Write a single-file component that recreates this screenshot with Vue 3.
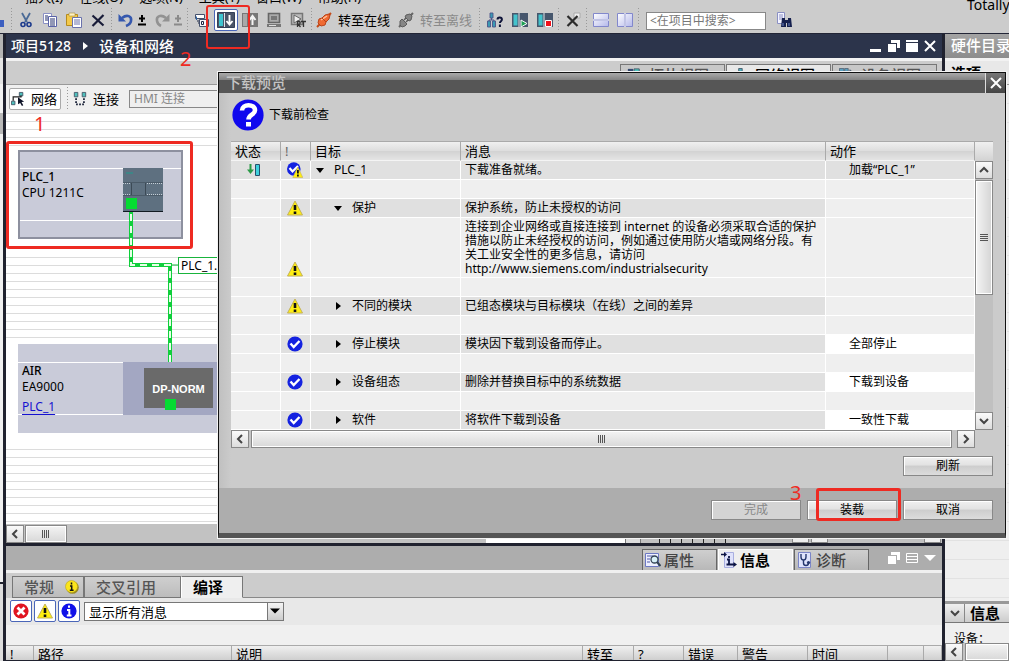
<script setup>
import { ref } from 'vue'

const menus = ['插入(I)', '在线(O)', '选项(N)', '工具(T)', '窗口(W)', '帮助(H)']

const editTools = [
  { icon: 'cut', label: '剪切' },
  { icon: 'copy', label: '复制' },
  { icon: 'paste', label: '粘贴' },
  { icon: 'delete', label: '删除' },
]
const loadTools = [
  { icon: 'compile', label: '编译' },
  { icon: 'download', label: '下载到设备', active: true },
  { icon: 'upload', label: '上传' },
  { icon: 'simulate', label: '仿真' },
  { icon: 'runtime', label: '启动运行系统' },
]
const deviceTools = [
  { icon: 'access', label: '可访问的设备' },
  { icon: 'startcpu', label: '启动 CPU' },
  { icon: 'stopcpu', label: '停止 CPU' },
]

const viewTabs = [
  { icon: 'topology', label: '拓扑视图' },
  { icon: 'netview', label: '网络视图', active: true },
  { icon: 'devview', label: '设备视图' },
]

const rows = [
  { status: 'load', mark: 'checkwarn', level: 0, open: true, target: 'PLC_1', message: '下载准备就绪。', action: '加载“PLC_1”', shade: true },
  {},
  { mark: 'warn', level: 1, open: true, target: '保护', message: '保护系统，防止未授权的访问' },
  {
    mark: 'warn',
    tall: true,
    message:
      '连接到企业网络或直接连接到 internet 的设备必须采取合适的保护\n措施以防止未经授权的访问，例如通过使用防火墙或网络分段。有\n关工业安全性的更多信息，请访问\nhttp://www.siemens.com/industrialsecurity',
  },
  {},
  { mark: 'warn', level: 1, target: '不同的模块', message: '已组态模块与目标模块（在线）之间的差异' },
  {},
  { mark: 'check', level: 1, target: '停止模块', message: '模块因下载到设备而停止。', action: '全部停止', edit: true },
  {},
  { mark: 'check', level: 1, target: '设备组态', message: '删除并替换目标中的系统数据', action: '下载到设备', edit: true },
  {},
  { mark: 'check', level: 1, target: '软件', message: '将软件下载到设备', action: '一致性下载', edit: true },
]

const inspectorTabs = [
  { icon: 'props', label: '属性' },
  { icon: 'info', label: '信息', active: true },
  { icon: 'diag', label: '诊断' },
]
const filterButtons = [
  { icon: 'error', label: '错误' },
  { icon: 'warn', label: '警告' },
  { icon: 'infodot', label: '信息' },
]
const logColumns = ['!', '路径', '说明', '转至', '?', '错误', '警告', '时间', '', '']
const filter = ref('显示所有消息')
const search = ref('')
</script>

<template>
  <div class="app">
    <svg class="defs" aria-hidden="true">
      <defs>
        <linearGradient id="lilac" x1="0" y1="0" x2="1" y2="1">
          <stop offset="0" stop-color="#fff" /><stop offset="1" stop-color="#b4b8ea" />
        </linearGradient>
      </defs>
      <symbol id="cut" viewBox="0 0 16 16"><path d="M4 1l5 9M12 1L7 10" stroke="#4b6a96" stroke-width="1.8" fill="none" /><circle cx="5" cy="12.500" r="2" fill="none" stroke="#1c3a8c" stroke-width="1.600" /><circle cx="11" cy="12.500" r="2" fill="none" stroke="#1c3a8c" stroke-width="1.600" /></symbol>
      <symbol id="copy" viewBox="0 0 16 16"><path d="M1.500 1.500h8v10h-8z" fill="#fff" stroke="#8a90c4" /><path d="M6.500 4.500h8v10h-8z" fill="#fff" stroke="#5a63a8" /><path d="M3 4h3M3 6h3M3 8h3M8 7h5M8 9h5M8 11h5M8 13h5" stroke="#25306e" /></symbol>
      <symbol id="paste" viewBox="0 0 16 16"><path d="M.5 2.500h11v11H.5z" fill="#f3c94a" stroke="#b58b1e" /><path d="M3 1h6v3H3z" fill="#fff3c4" stroke="#a58a3a" stroke-width=".6" /><path d="M6.500 5.500h9v10h-9z" fill="#fff" stroke="#6a72ac" /><path d="M8 8h6M8 10h6M8 12h6" stroke="#6a72ac" /></symbol>
      <symbol id="delete" viewBox="0 0 16 16"><path d="M2.500 3.500l11 10M13.500 3l-11 11" stroke="#181c38" stroke-width="2.200" /></symbol>
      <symbol id="undo" viewBox="0 0 16 16"><path d="M4 6c5-4 10-2 9 3-.4 2.500-2.500 4-5 5" fill="none" stroke="#3558ae" stroke-width="2.600" /><path d="M.5 2v7.500H8z" fill="#3558ae" /></symbol>
      <symbol id="redo" viewBox="0 0 16 16"><path d="M12 6C7 2 2 4 3 9c.4 2.500 2 4 4 5" fill="none" stroke="#929292" stroke-width="2.600" /><path d="M15.500 2v7.500H8z" fill="#929292" /></symbol>
      <symbol id="plusminus" viewBox="0 0 8 12"><path d="M4 1v7M1 4.500h6M0 10.500h8" stroke="currentColor" stroke-width="2" /></symbol>
      <symbol id="compile" viewBox="0 0 16 16"><path d="M1.500 2.500h9v4h-9z" fill="#fff" stroke="#44506c" /><path d="M2.500 8V4.500" stroke="#2c66a8" /><path d="M5.500 7.500h9v7h-9z" fill="#f6f6fa" stroke="#44506c" /><path d="M7.500 9.500h2v3h-2zM12.500 9v4.500" fill="none" stroke="#1c2642" /><path d="M3 9h2M4 11h1" stroke="#1c2642" /></symbol>
      <symbol id="download" viewBox="0 0 18 16"><path d="M.5.500h17v15H.5z" fill="#4a5468" stroke="#344058" /><path d="M2 2h4v12H2z" fill="#3fc4cf" /><path d="M7.500 1v14" stroke="#dfe4ec" /><path d="M12.500 3v9M9.500 9l3 3.500 3-3.500" fill="none" stroke="#fff" stroke-width="1.900" /></symbol>
      <symbol id="upload" viewBox="0 0 16 16"><path d="M0 1h16v14H0z" fill="#777" /><path d="M1 2h4v12H1z" fill="#a8a8a8" /><path d="M10.500 13V5M7.500 8l3-4 3 4" fill="none" stroke="#f4f4f4" stroke-width="2" /></symbol>
      <symbol id="simulate" viewBox="0 0 16 16"><path d="M2.500 1.500h11v9h-11z" fill="#aaa" stroke="#666" stroke-width="1.600" /><path d="M5 4h6v4H5z" fill="#777" /><path d="M1 12h14v3H1z" fill="#777" /><path d="M3 13.500h7" stroke="#ddd" /></symbol>
      <symbol id="runtime" viewBox="0 0 16 16"><path d="M1.500 1.500h11v11h-11z" fill="#bbb" stroke="#777" stroke-width="1.500" /><path d="M4 3l7 4-7 4z" fill="#eee" stroke="#666" /><path d="M7.500 15V9.500h2.200q1 1.300 0 2.600H8l2.500 2.900M11 9.500h5M13.500 9.500V15" fill="none" stroke="#333" stroke-width="1.300" /></symbol>
      <symbol id="online" viewBox="0 0 16 16"><path d="M1 15l3-3M12 4l3-3" stroke="#c54a18" stroke-width="2" /><path d="M3 7l3-1 3-3 4-1 1 1-1 4-3 3-1 3-4 1-3-3z" fill="#ef6a32" stroke="#b9441a" /><path d="M5 8l6-4" stroke="#ffc09a" stroke-width="1.500" /><path d="M6 6l4 4" stroke="#b9441a" /></symbol>
      <symbol id="offline" viewBox="0 0 16 16"><path d="M1 15l3-3M12 4l3-3" stroke="#666" stroke-width="2" /><path d="M8 3l4-1 2 2-1 4-2 1-4-4zM2 9l2-2 5 5-2 2-3 1-2-2z" fill="#858585" stroke="#5c5c5c" /><path d="M6 8l2-2M8 10l2-2" stroke="#5c5c5c" stroke-width="1.500" /></symbol>
      <symbol id="access" viewBox="0 0 16 16"><path d="M3 1h3v5H3zM.5 9h3v6h-3zM5.500 9h3v6h-3z" fill="#3a9ab4" stroke="#4c5488" stroke-width=".9" /><path d="M4.500 6v2M2 9V8h5v1" stroke="#4c5488" fill="none" /><path d="M10.500 7.500q0-2 2.200-2t2.200 2c0 1.600-2 1.700-2 3.500M12.900 12.500V15" fill="none" stroke="#0d1338" stroke-width="2" /></symbol>
      <symbol id="startcpu" viewBox="0 0 16 16"><path d="M0 1h16v14H0z" fill="#46566c" /><path d="M1.500 2.500h4v11h-4z" fill="#42c3cc" /><path d="M7 1v14" stroke="#dfe6ea" /><path d="M9 8l6 3.500L9 15z" fill="#1ea055" stroke="#fff" /></symbol>
      <symbol id="stopcpu" viewBox="0 0 16 16"><path d="M0 1h16v14H0z" fill="#46566c" /><path d="M1.500 2.500h4v11h-4z" fill="#42c3cc" /><path d="M7 1v14" stroke="#dfe6ea" /><path d="M8.500 8.500h6v6h-6z" fill="#f0121c" stroke="#fff" /></symbol>
      <symbol id="crossref" viewBox="0 0 16 16"><path d="M9 1h6v5H9z" fill="#eee" stroke="#aaa" /><path d="M2.500 4l10 10M12.500 4l-10 10" stroke="#2c2c2c" stroke-width="2.200" /></symbol>
      <symbol id="splith" viewBox="0 0 16 16"><path d="M.5 1.500h15v6H.5zM.5 8.500h15v6H.5z" fill="url(#lilac)" stroke="#8288cc" /><path d="M0 8h16" stroke="#fff" /></symbol>
      <symbol id="splitv" viewBox="0 0 16 16"><path d="M.5 1.500h7v13h-7zM8.500 1.500h7v13h-7z" fill="url(#lilac)" stroke="#8288cc" /><path d="M8 1v14" stroke="#fff" /></symbol>
      <symbol id="find" viewBox="0 0 16 16"><path d="M1.500.5h7v11h-7z" fill="#f4f4ff" stroke="#8a90c4" /><path d="M3 3h4M3 5h4M3 7h4" stroke="#8a90c4" /><path d="M6 6h3v2h3V6h3l1 9h-5v-4h-1v4H5z" fill="#15204e" /><path d="M7 11v3M13 11v3" stroke="#6e86c8" /></symbol>
      <symbol id="network" viewBox="0 0 16 16"><path d="M9.500.5h4v4h-4zM.5 10.500h4v4h-4z" fill="#4ec0bc" stroke="#456" /><path d="M2.500 10V5.500h9V4" fill="none" stroke="#222" stroke-width="1.400" /><path d="M8 6l7 5-3 .5 2 3.500-1.500 1-2-3.500L8 14z" fill="#0e1428" /></symbol>
      <symbol id="connection" viewBox="0 0 16 16"><path d="M1.500.5h4v5h-4zM10.500.5h4v5h-4z" fill="#4ec0bc" stroke="#456" /><path d="M3.500 7v7h9V7" fill="none" stroke="#1a2238" stroke-width="2" stroke-dasharray="2 1.500" /></symbol>
      <symbol id="topology" viewBox="0 0 16 16"><path d="M1 1h6v14H1z" fill="#364a72" /><path d="M8 1h6v6H8z" fill="#4cc4bc" stroke="#456" /></symbol>
      <symbol id="netview" viewBox="0 0 16 16"><path d="M6.500.5h4v6h-4z" fill="#4cb0c0" stroke="#456" /><path d="M8.500 7v4M2 11h12" stroke="#333" /></symbol>
      <symbol id="devview" viewBox="0 0 16 16"><path d="M.5.500h5v12h-5zM6.500.5h4v12h-4z" fill="#5aa0c0" stroke="#567" /><path d="M12 2l3 3v8" fill="none" stroke="#567" stroke-width="1.500" /></symbol>
      <symbol id="warn" viewBox="0 0 16 16"><path d="M8 1l7.500 14H.5z" fill="#ffee10" stroke="#c3b15a" stroke-width="1" stroke-linejoin="round" /><path d="M8 5v5M8 11.500V14" stroke="#111" stroke-width="2.600" /></symbol>
      <symbol id="check" viewBox="0 0 16 16"><circle cx="8" cy="8" r="7.600" fill="#1422e0" /><path d="M3.500 7.500l3.200 3.500L12.500 5" fill="none" stroke="#fff" stroke-width="2.400" /></symbol>
      <symbol id="checkwarn" viewBox="0 0 16 16"><circle cx="6.800" cy="7" r="6.800" fill="#1422e0" /><path d="M2.500 6l3 3.500L11 4" fill="none" stroke="#fff" stroke-width="2.200" /><path d="M10.800 5l5 10.500h-10z" fill="#ffee10" stroke="#c3b15a" stroke-width=".6" /><path d="M10.900 8v3.500M10.900 12.500v2" stroke="#111" stroke-width="1.800" /></symbol>
      <symbol id="load" viewBox="0 0 14 14"><path d="M3.500 1v7" stroke="#2a9a46" stroke-width="2" /><path d="M0 6.500h7L3.500 11z" fill="#2a9a46" /><path d="M8.500 1.500h4v11h-4z" fill="#3fd0dc" stroke="#26506c" /></symbol>
      <symbol id="error" viewBox="0 0 16 16"><circle cx="8" cy="8" r="7.600" fill="#e01420" /><path d="M4.500 4.500l7 7M11.500 4.500l-7 7" stroke="#fff" stroke-width="2.800" /></symbol>
      <symbol id="infodot" viewBox="0 0 16 16"><circle cx="8" cy="8" r="7.600" fill="#1010e8" /><path d="M8 2.500v2.300M6 7h2.300v5M5.800 12.500h4.700" fill="none" stroke="#fff" stroke-width="2" /></symbol>
      <symbol id="infoyellow" viewBox="0 0 14 14"><circle cx="7.500" cy="7.500" r="6.300" fill="#9a8a20" /><circle cx="6.500" cy="6.500" r="6" fill="#fbe51c" stroke="#b9a51c" stroke-width=".6" /><path d="M6.500 2.500v2M5 6h1.700v4M4.800 10.200h3.800" fill="none" stroke="#111" stroke-width="1.500" /></symbol>
      <symbol id="question" viewBox="0 0 32 32"><circle cx="16" cy="16" r="15.600" fill="#1008ee" /><path d="M10 11.500c0-7 13-7 13-.3 0 4.600-6.500 4.300-6.500 9.300" fill="none" stroke="#fff" stroke-width="4.600" /><path d="M14 23h5v4.500h-5z" fill="#fff" /></symbol>
      <symbol id="props" viewBox="0 0 16 16"><path d="M.5 1.500h13v13H.5z" fill="#eef0ff" stroke="#6c78c4" /><path d="M2 4h6M2 7h3M2 10h3" stroke="#4c58a8" /><circle cx="9.500" cy="7.500" r="3.500" fill="#d8f0f8" stroke="#345" stroke-width="1.300" /><path d="M12 10l3.500 4" stroke="#345" stroke-width="2" /></symbol>
      <symbol id="info" viewBox="0 0 16 16"><path d="M3.500.5h9v15h-9z" fill="#dfe2fb" stroke="#a8aee0" /><path d="M0 2.500h4" stroke="#0c1444" stroke-width="1.500" /><path d="M3 0l3 2.500L3 5zM12.500 10l3.500 2.500-3.500 2.500z" fill="#0c1444" /><path d="M8 4v2M6 7.500h2V12M5.500 12.500H13" fill="none" stroke="#0c1444" stroke-width="1.800" /></symbol>
      <symbol id="diag" viewBox="0 0 16 16"><path d="M1.500.5h12v15h-12z" fill="#dfe4fb" stroke="#7c86c8" /><path d="M4 2v3q0 3 2.500 3T9 5V2M6.500 8v3q0 2.500 2.500 2.500t2.500-2.500" fill="none" stroke="#26386e" stroke-width="1.400" /><circle cx="11.500" cy="10.500" r="1.600" fill="#26386e" /></symbol>
      <symbol id="minimize" viewBox="0 0 12 12"><path d="M0 9h11v3H0z" fill="currentColor" /></symbol>
      <symbol id="restore" viewBox="0 0 12 12"><path d="M3 0h9v8H9V3H3z" fill="currentColor" /><path d="M0 4h8v8H0z" fill="currentColor" /></symbol>
      <symbol id="maximize" viewBox="0 0 12 12"><path d="M0 0h12v2H0zM0 3h12v9H0z" fill="currentColor" /></symbol>
      <symbol id="close" viewBox="0 0 12 12"><path d="M1 1l10 10M11 1L1 11" stroke="currentColor" stroke-width="2" /></symbol>
      <symbol id="list" viewBox="0 0 12 12"><path d="M.5 1.500h11v9H.5zM1 4.500h10M1 7.500h10" fill="none" stroke="currentColor" /></symbol>
      <symbol id="tri" viewBox="0 0 12 12"><path d="M0 3h12L6 9z" fill="currentColor" /></symbol>
      <symbol id="chevleft" viewBox="0 0 12 12"><path d="M8 2L4 6l4 4" fill="none" stroke="#444" stroke-width="2" /></symbol>
      <symbol id="chevright" viewBox="0 0 12 12"><path d="M4 2l4 4-4 4" fill="none" stroke="#444" stroke-width="2" /></symbol>
      <symbol id="chevup" viewBox="0 0 12 12"><path d="M2 8l4-4 4 4" fill="none" stroke="#444" stroke-width="2" /></symbol>
      <symbol id="chevdown" viewBox="0 0 12 12"><path d="M2 4l4 4 4-4" fill="none" stroke="#444" stroke-width="2" /></symbol>
    </svg>

    <header class="top">
      <nav class="menubar">
        <span v-for="m in menus" :key="m">{{ m }}</span>
        <span class="brand">Totally</span>
      </nav>
      <div class="toolbar">
        <span class="savefrag"></span>
        <span class="sep"></span>
        <button v-for="t in editTools" :key="t.icon" class="tool" :aria-label="t.label"><svg><use :href="'#' + t.icon" /></svg></button>
        <span class="sep"></span>
        <button class="tool" aria-label="撤销"><svg><use href="#undo" /></svg></button>
        <button class="tool tiny" aria-label="撤销列表"><svg><use href="#plusminus" /></svg></button>
        <button class="tool" aria-label="重做"><svg><use href="#redo" /></svg></button>
        <button class="tool tiny dim" aria-label="重做列表"><svg><use href="#plusminus" /></svg></button>
        <span class="sep"></span>
        <button v-for="t in loadTools" :key="t.icon" class="tool" :class="{ active: t.active }" :aria-label="t.label"><svg><use :href="'#' + t.icon" /></svg></button>
        <span class="sep"></span>
        <button class="tool wide"><svg><use href="#online" /></svg>转至在线</button>
        <button class="tool wide dim"><svg><use href="#offline" /></svg>转至离线</button>
        <span class="sep"></span>
        <button v-for="t in deviceTools" :key="t.icon" class="tool roomy" :aria-label="t.label"><svg><use :href="'#' + t.icon" /></svg></button>
        <span class="sep"></span>
        <button class="tool" aria-label="交叉引用"><svg><use href="#crossref" /></svg></button>
        <span class="sep"></span>
        <button class="tool" aria-label="水平拆分"><svg><use href="#splith" /></svg></button>
        <button class="tool" aria-label="垂直拆分"><svg><use href="#splitv" /></svg></button>
        <span class="sep"></span>
        <input v-model="search" class="search" type="text" placeholder="<在项目中搜索>" aria-label="在项目中搜索" />
        <button class="tool" aria-label="搜索"><svg><use href="#find" /></svg></button>
      </div>
    </header>

    <div class="body">
      <aside class="leftedge"></aside>
      <main class="main">
        <div class="titlebar">
          <span>项目5128</span>
          <i class="crumb"></i>
          <span>设备和网络</span>
          <div class="winbtns">
            <button aria-label="最小化"><svg><use href="#minimize" /></svg></button>
            <button aria-label="还原"><svg><use href="#restore" /></svg></button>
            <button aria-label="最大化"><svg><use href="#maximize" /></svg></button>
            <button aria-label="关闭编辑器"><svg><use href="#close" /></svg></button>
          </div>
        </div>

        <div class="viewtabs">
          <button v-for="t in viewTabs" :key="t.icon" :class="{ active: t.active }"><svg><use :href="'#' + t.icon" /></svg>{{ t.label }}</button>
        </div>

        <div class="netbar">
          <button class="netbtn on"><svg><use href="#network" /></svg>网络</button>
          <span class="sep"></span>
          <button class="netbtn"><svg><use href="#connection" /></svg>连接</button>
          <select disabled aria-label="连接类型"><option>HMI 连接</option></select>
        </div>

        <div class="canvas">
          <div class="clearing first"></div>
          <div class="clearing second"></div>
          <div class="device plc">
            <div class="caption"><b>PLC_1</b><span>CPU 1211C</span></div>
            <svg class="module" viewBox="0 0 40 44"><path d="M0 0h40v44H0z" fill="#5e7080" /><path d="M0 43.500h40" stroke="#111a22" /><path d="M3 5h7" stroke="#1f9a8e" /><path d="M0 14.500h40M0 27.500h40" stroke="#4a5a68" /><path d="M0 15.500h8M24 15.500h16M0 26.500h8M24 26.500h16" stroke="#c4ced6" stroke-dasharray="1 1" /><path d="M8.500 15v12M22.500 15v12" stroke="#3c4a56" /><path d="M3 30h11v11H3z" fill="#05dc32" /></svg>
          </div>
          <div class="device air">
            <div class="caption"><b>AIR</b><span>EA9000</span><a href="#plc">PLC_1</a></div>
            <div class="rack"><div class="norm">DP-NORM<i></i></div></div>
          </div>
          <svg class="wires" width="220" height="260">
            <path d="M125 99v53h39v97" fill="none" stroke="#10cf3c" stroke-width="4" />
            <path d="M125 101v51h39v97" fill="none" stroke="#e8ffe8" stroke-width="2" stroke-dasharray="7 5" />
            <path d="M166 152h7" stroke="#10b838" />
          </svg>
          <div class="netlabel">PLC_1.PN/IE</div>
          <span class="num one">1</span>
        </div>

        <div class="hscroll">
          <button class="sb" aria-label="向左滚动"><svg><use href="#chevleft" /></svg></button>
          <span class="thumb"><i></i></span>
          <span class="zoomfield"></span>
          <span class="ticks"></span>
          <span class="stub"></span>
          <span class="stub"></span>
          <span class="stub end"></span>
        </div>

        <section class="inspector">
          <div class="inspect-tabs">
            <button v-for="t in inspectorTabs" :key="t.icon" :class="{ active: t.active }"><svg><use :href="'#' + t.icon" /></svg>{{ t.label }}</button>
            <div class="panebtns">
              <svg><use href="#restore" /></svg>
              <svg><use href="#list" /></svg>
              <svg><use href="#tri" /></svg>
            </div>
          </div>
          <div class="subtabs">
            <button class="general">常规<svg><use href="#infoyellow" /></svg></button>
            <button class="xref">交叉引用</button>
            <button class="active">编译</button>
            <span class="rest"></span>
          </div>
          <div class="filters">
            <button v-for="f in filterButtons" :key="f.icon" :aria-label="f.label"><svg><use :href="'#' + f.icon" /></svg></button>
            <div class="combo">
              <select v-model="filter" aria-label="消息过滤"><option>显示所有消息</option></select>
              <span class="drop"><svg><use href="#tri" /></svg></span>
            </div>
          </div>
          <table class="log">
            <colgroup><col class="c0" /><col class="c1" /><col /><col class="c3" /><col class="c4" /><col class="c5" /><col class="c6" /><col class="c7" /><col class="c8" /><col class="c9" /></colgroup>
            <thead><tr><th v-for="(c, i) in logColumns" :key="i"><div>{{ c }}</div></th></tr></thead>
          </table>
        </section>
      </main>

      <aside class="catalog">
        <div class="cat-title">硬件目录</div>
        <div class="cat-options">选项</div>
        <div class="cat-list"></div>
        <div class="cat-info"><span class="toggle"><svg><use href="#chevdown" /></svg></span>信息</div>
        <div class="cat-device">设备：</div>
        <div class="cat-scroll"><button class="sb" aria-label="目录向左滚动"><svg><use href="#chevleft" /></svg></button><span class="thumb"></span></div>
      </aside>
    </div>

    <div class="redbox plcbox"></div>
    <div class="redbox toolbox"></div>
    <span class="num two">2</span>

    <section class="dialog" role="dialog" aria-labelledby="dlg-title">
      <div class="dlg-title">
        <span id="dlg-title">下载预览</span>
        <button aria-label="关闭"><svg><use href="#close" /></svg></button>
      </div>
      <div class="dlg-body">
        <div class="dlg-head"><svg><use href="#question" /></svg>下载前检查</div>
        <div class="gridwrap">
          <table class="preview">
            <colgroup><col class="p0" /><col class="p1" /><col class="p2" /><col /><col class="p4" /></colgroup>
            <thead><tr><th>状态</th><th class="bang">!</th><th>目标</th><th>消息</th><th>动作</th></tr></thead>
            <tbody>
              <tr v-for="(r, i) in rows" :key="i" :class="{ shaded: r.target, tall: r.tall }">
                <td class="status" :class="{ fill: r.shade }"><svg v-if="r.status"><use href="#load" /></svg></td>
                <td class="mark"><svg v-if="r.mark"><use :href="'#' + r.mark" /></svg></td>
                <td><div v-if="r.target" class="target" :class="'level' + r.level"><i :class="r.open ? 'open' : 'closed'"></i>{{ r.target }}</div></td>
                <td class="message">{{ r.message }}</td>
                <td class="action" :class="{ fill: r.shade, edit: r.edit }">{{ r.action }}</td>
              </tr>
            </tbody>
          </table>
          <div class="vscroll">
            <span class="corner"></span>
            <button class="sb" aria-label="向上滚动"><svg><use href="#chevup" /></svg></button>
            <span class="thumb"><i></i></span>
            <button class="sb last" aria-label="向下滚动"><svg><use href="#chevdown" /></svg></button>
          </div>
        </div>
        <div class="dlg-hscroll">
          <button class="sb" aria-label="表格向左滚动"><svg><use href="#chevleft" /></svg></button>
          <span class="thumb"><i></i></span>
          <button class="sb" aria-label="表格向右滚动"><svg><use href="#chevright" /></svg></button>
        </div>
        <div class="refresh"><button class="btn">刷新</button></div>
      </div>
      <div class="dlg-foot">
        <button class="btn" disabled>完成</button>
        <div class="loadwrap">
          <button class="btn">装载</button>
          <div class="redbox loadbox"></div>
          <span class="num three">3</span>
        </div>
        <button class="btn">取消</button>
      </div>
    </section>
  </div>
</template>

<style>
body { margin: 0; background: #ccc; }
</style>

<style scoped>
* { box-sizing: border-box; }
.app { position: relative; display: flex; flex-direction: column; height: 100vh; overflow: hidden; background: #ccc; color: #000; font: 12px/16px "Noto Sans", "Noto Sans CJK SC", sans-serif; }
button, input, select { font: inherit; color: inherit; margin: 0; padding: 0; border: 0; background: none; border-radius: 0; }
svg { display: block; flex: none; width: 16px; height: 16px; }
i { display: block; }
.defs { position: absolute; width: 0; height: 0; }

.top { height: 34px; flex: none; border-bottom: 1px solid #222536; }
.menubar { display: flex; align-items: flex-end; gap: 16px; height: 6px; padding: 0 0 1px 25px; font-size: 13px; white-space: nowrap; }
.brand { margin: 0 0 -8px auto; width: 42px; font-size: 14px; }
.toolbar { display: flex; align-items: center; height: 27px; }
.savefrag { width: 4px; height: 14px; margin-right: 6px; background: linear-gradient(#ccc 50%, #3c5fc0 50%); }
.sep { flex: none; width: 4px; height: 24px; background: repeating-linear-gradient(#999 0 1px, transparent 1px 3px) 1px 0 / 1px 100% no-repeat; }
.tool { display: flex; flex: none; align-items: center; justify-content: center; width: 24px; height: 22px; white-space: nowrap; }
.tool.roomy { width: 25px; }
.tool.tiny { width: 12px; justify-content: flex-start; }
.tool.tiny svg { width: 8px; height: 12px; }
.tool.dim { color: #8a8a8a; }
.tool.active { background: #fff; border: 1px solid #4a66b8; border-radius: 2px; }
.tool.active svg { width: 18px; }
.tool.wide { width: 82px; gap: 6px; justify-content: flex-start; padding-left: 2px; font-size: 13px; }
.search { width: 120px; height: 18px; margin: 2px 6px 0 5px; padding: 0 3px; background: #fff; border: 1px solid #888; font-size: 12px; }
.search::placeholder { color: #777; opacity: 1; }

.body { display: flex; flex: 1; min-height: 0; }
.leftedge { width: 6px; flex: none; border-right: 3px solid #20222f; background: linear-gradient(#b4b4b4 0 24px, #e4e4e4 24px 50px, #f2f2f2 50px 79px, #b8b8b8 79px 100px, #f0f0f0 100px 548px, #20222f 548px 550px, #ddd 550px); }
.main { display: flex; flex-direction: column; flex: 1; min-width: 0; border-right: 3px solid #20222f; border-bottom: 1px solid #20222f; }
.titlebar { display: flex; align-items: center; flex: none; height: 27px; padding-left: 5px; background: #2c344b; border-bottom: 3px solid #f2f2f2; color: #fff; font-size: 15px; font-weight: 500; line-height: 24px; }
.titlebar > span:first-child { font-size: 14px; }
.crumb { margin: 0 11px 0 12px; border-left: 5px solid #fff; border-top: 4px solid transparent; border-bottom: 4px solid transparent; }
.winbtns { display: flex; gap: 6px; margin-left: auto; padding-right: 6px; }
.winbtns svg { width: 12px; height: 12px; }

.viewtabs { display: flex; flex: none; justify-content: flex-end; gap: 1px; height: 24px; padding: 3px 5px 0 0; border-bottom: 1px solid #999; background: #ccc; }
.viewtabs button { display: flex; align-items: center; gap: 8px; width: 105px; height: 20px; padding-left: 6px; border: 1px solid #777; border-bottom: 0; background: #c8c8c8; color: #555; font-size: 15px; font-weight: 500; white-space: nowrap; }
.viewtabs .active { background: #e8e8e8; color: #000; }
.viewtabs svg { width: 14px; height: 14px; }
.netbar { display: flex; flex: none; align-items: center; height: 28px; padding-left: 3px; background: #efefef; font-size: 13px; }
.netbtn { display: flex; align-items: center; gap: 6px; width: 56px; height: 22px; padding-left: 3px; white-space: nowrap; }
.netbtn svg { width: 14px; }
.netbtn.on { width: 52px; padding-left: 1px; margin-right: 5px; background: #fff; border: 1px solid #aaa; border-radius: 2px; }
.netbar select { width: 180px; height: 18px; margin-left: 3px; padding-left: 4px; appearance: none; border: 1px solid #888; color: #888; opacity: 1; font-size: 12px; line-height: 16px; }

.canvas { position: relative; flex: 1; min-height: 0; overflow: hidden; background: repeating-linear-gradient(#dcdcdc 0 1px, #fff 1px 8px); }
.clearing { position: absolute; left: 0; right: 0; background: #fff; }
.clearing.first { top: 33px; height: 110px; }
.clearing.second { top: 226px; height: 110px; }
.device { position: absolute; left: 12px; background: #c9cbd9; }
.plc { top: 37px; width: 165px; height: 89px; border: 2px solid #8d909f; }
.caption { display: flex; flex-direction: column; margin-top: 16px; height: 53px; border-top: 1px solid #fff; border-bottom: 1px solid #fff; padding-left: 2px; }
.caption b { font-weight: 500; }
.module { position: absolute; left: 103px; top: 16px; width: 40px; height: 44px; }
.air { top: 231px; width: 260px; height: 89px; }
.air .caption { width: 105px; margin-top: 18px; padding-left: 4px; }
.air a { margin-top: 4px; color: #1512d0; text-decoration: underline; text-underline-offset: 3px; }
.rack { position: absolute; left: 105px; top: 18px; width: 155px; height: 53px; padding: 6px 0 0 21px; background: #a3a7c2; }
.norm { position: relative; width: 69px; height: 40px; background: #6a6a6a; color: #fff; font: bold 11px/42px "Liberation Sans", sans-serif; text-align: center; }
.norm i { position: absolute; left: 21px; top: 31px; width: 11px; height: 11px; background: #05dc32; }
.wires { position: absolute; left: 0; top: 0; width: 220px; height: 260px; }
.netlabel { position: absolute; left: 172px; top: 144px; width: 80px; padding-left: 2px; border: 1px solid #19b43c; background: #fff; line-height: 15px; }

.num { position: absolute; color: #ef2b23; font: 20px/20px "Noto Sans", sans-serif; }
.num.one { left: 28px; top: 1px; }
.num.two { left: 180px; top: 49px; }
.num.three { left: -17px; top: -17px; }
.redbox { position: absolute; border: 3px solid #ee2a22; border-radius: 3px; pointer-events: none; }
.plcbox { left: 6px; top: 141px; width: 187px; height: 108px; }
.toolbox { left: 206px; top: 5px; width: 44px; height: 44px; border-width: 2px; }
.loadbox { left: 9px; top: -12px; width: 85px; height: 33px; }

.sb { display: flex; flex: none; align-items: center; justify-content: center; width: 18px; height: 18px; border: 1px solid #888; background: linear-gradient(#fafafa, #ddd); }
.sb svg { width: 12px; height: 12px; }
.thumb { display: flex; align-items: center; justify-content: center; border: 1px solid #888; background: linear-gradient(#f4f4f4, #d8d8d8); box-shadow: inset 0 0 0 1px #fff; }
.hscroll .thumb i, .dlg-hscroll .thumb i { width: 8px; height: 8px; background: repeating-linear-gradient(90deg, #555 0 1px, transparent 1px 2px); }
.hscroll { display: flex; flex: none; height: 22px; padding-top: 1px; border-bottom: 3px solid #20222f; background: #c2c2c2; }
.hscroll .thumb { width: 42px; height: 18px; margin-left: 1px; }
.zoomfield { width: 155px; margin-left: auto; background: linear-gradient(90deg, #fff 139px, #777 139px 140px, #ddd 140px); border-right: 1px solid #777; }
.ticks { width: 68px; margin: 0 65px 0 18px; background: repeating-linear-gradient(90deg, #222 0 1px, transparent 1px 11px); }
.stub { width: 17px; margin-right: 2px; background: #eee; border: 1px solid #888; }
.stub.end { margin: 0 1px 0 94px; }

.inspector { flex: none; background: #efefef; }
.inspect-tabs { display: flex; align-items: flex-end; justify-content: flex-end; gap: 1px; height: 27px; background: #adadad; border-bottom: 3px solid #f0f0f0; }
.inspect-tabs button { display: flex; align-items: center; gap: 3px; width: 75px; height: 21px; padding-left: 2px; border: 1px solid #666; border-bottom: 0; background: linear-gradient(#cfcfcf, #b8b8b8); color: #444; font-size: 15px; font-weight: 500; white-space: nowrap; }
.inspect-tabs .active { background: #efefef; color: #000; border-color: #fff; font-weight: 700; }
.panebtns { display: flex; gap: 6px; width: 72px; height: 18px; padding-left: 18px; color: #fff; }
.panebtns svg { width: 12px; height: 12px; }
.subtabs { display: flex; align-items: flex-end; height: 25px; background: #ccc; padding-left: 6px; }
.subtabs button { height: 22px; padding-left: 11px; border: 1px solid #777; background: linear-gradient(#cfcfcf, #bcbcbc); color: #555; font-size: 15px; font-weight: 500; text-align: left; white-space: nowrap; }
.subtabs .general { display: flex; align-items: center; gap: 11px; width: 72px; }
.subtabs .general svg { width: 14px; height: 14px; }
.subtabs .xref { width: 97px; }
.subtabs .active { width: 62px; background: #efefef; border-bottom-color: #efefef; border-left-color: #fff; color: #000; font-weight: 700; }
.subtabs .rest { flex: 1; height: 1px; background: #888; }
.filters { display: flex; gap: 2px; height: 47px; padding: 2px 0 0 4px; background: linear-gradient(#e8e8e8 27px, #f0f0f0 27px); }
.filters button { display: flex; align-items: center; justify-content: center; width: 22px; height: 22px; background: #fff; border: 1px solid #4a66b8; border-radius: 2px; }
.combo { position: relative; width: 200px; height: 19px; margin: 2px 0 0 2px; font-size: 13px; }
.combo select { width: 100%; height: 19px; padding-left: 4px; appearance: none; background: #fff; border: 1px solid #777; }
.drop { position: absolute; right: 1px; top: 1px; width: 16px; height: 17px; padding: 3px 2px; border-left: 1px solid #777; background: linear-gradient(#f4f4f4, #ccc); pointer-events: none; }
.drop svg { width: 10px; height: 10px; }

table { border-collapse: separate; border-spacing: 0; table-layout: fixed; }
th { padding: 0; font-weight: 400; text-align: left; }
.log { width: 100%; font-size: 13px; }
.log th { border-top: 1px solid #aaa; border-right: 1px solid #aaa; padding-left: 4px; background: linear-gradient(#f0f0f0, #cfcfcf); }
.log th div { height: 14px; line-height: 17px; overflow: hidden; }
.c0 { width: 28px; } .c1 { width: 198px; } .c3 { width: 51px; } .c4 { width: 50px; } .c5 { width: 54px; } .c6 { width: 70px; } .c7 { width: 80px; } .c8 { width: 36px; } .c9 { width: 18px; }

.catalog { display: flex; flex-direction: column; width: 64px; flex: none; background: #efefef; white-space: nowrap; overflow: hidden; }
.cat-title { height: 27px; padding-left: 6px; border-bottom: 3px solid #f2f2f2; background: linear-gradient(#a4a4a4, #8c8c8c); color: #fff; font-size: 15px; font-weight: 500; line-height: 22px; }
.cat-options { height: 24px; padding-left: 6px; font-size: 15px; font-weight: 700; line-height: 24px; background: #e8e8e8; border-bottom: 1px solid #999; }
.cat-list { flex: 1; background: repeating-linear-gradient(#efefef 0 18px, #e2e2e2 18px 19px); }
.cat-info { display: flex; align-items: center; height: 22px; border-top: 3px solid #999; border-bottom: 1px solid #777; background: linear-gradient(#f0f0f0, #ccc); font-size: 15px; font-weight: 700; }
.toggle { width: 20px; height: 18px; margin-right: 5px; padding: 3px 4px; border-right: 1px solid #888; }
.toggle svg { width: 12px; height: 12px; }
.cat-device { height: 20px; padding: 7px 0 0 9px; overflow: hidden; font-size: 12px; line-height: 18px; }
.cat-scroll { display: flex; height: 18px; background: #c2c2c2; }
.cat-scroll .thumb { flex: 1; margin-left: 2px; }

.dialog { position: absolute; left: 218px; right: 3px; top: 72px; border: 1px solid #111; border-bottom: 5px solid #555; background: #cbcbcb; box-shadow: 0 0 0 1px #f4f4f4; }
.dlg-title { display: flex; justify-content: space-between; height: 20px; padding-left: 7px; background: linear-gradient(#aaa 0, #828282 7px, #565656 7px); color: #c4c4c4; font-size: 15px; line-height: 19px; font-weight: 500; }
.dlg-title button { width: 20px; padding: 4px; border-left: 1px solid #ddd; color: #fff; background: linear-gradient(#777, #444); }
.dlg-title svg { width: 12px; height: 12px; }
.dlg-body { padding: 5px 12px 12px; background: linear-gradient(90deg, #c0c0c0, #cbcbcb 12px); }
.dlg-head { display: flex; align-items: center; gap: 5px; height: 33px; margin-bottom: 10px; padding-left: 1px; }
.dlg-head svg { width: 32px; height: 32px; }
.gridwrap { display: flex; }
.preview { flex: 1; min-width: 0; }
.preview th { height: 20px; padding-left: 4px; border-top: 1px solid #aaa; border-right: 1px solid #aaa; border-bottom: 1px solid #f4f4f4; background: linear-gradient(#f0f0f0, #ddd 50%, #d2d2d2 50%, #e4e4e4); font-size: 13px; line-height: 18px; }
.preview .bang { color: #666; }
.p0 { width: 50px; } .p1 { width: 30px; } .p2 { width: 150px; } .p4 { width: 149px; }
.preview td { height: 19px; padding: 0 0 0 4px; border-right: 1px solid #fff; border-bottom: 1px solid #fff; background: #efefef; line-height: 18px; }
.shaded td { background: #e0e0e0; }
.shaded .status, .shaded .action { background: #efefef; }
.shaded .fill { background: #e0e0e0; }
.shaded .edit { background: #fff; }
.preview .status { padding-left: 16px; }
.status svg { width: 14px; height: 14px; }
.preview .mark { padding-left: 6px; }
.tall td { height: 60px; vertical-align: bottom; }
.tall .message { vertical-align: top; padding-top: 2px; line-height: 14px; white-space: pre; }
.preview .action { padding-left: 23px; }
.target { display: flex; align-items: center; padding-left: 1px; }
.level1 { padding-left: 19px; }
.target i { margin-right: 10px; border: 4px solid transparent; }
.target .open { border-top: 5px solid #000; border-bottom: 0; }
.target .closed { margin: 0 11px 0 2px; border-left: 5px solid #000; border-right: 0; }
.vscroll { display: flex; flex-direction: column; width: 18px; background: #c0c0c0; }
.corner { height: 20px; border-top: 1px solid #aaa; background: linear-gradient(#f0f0f0, #d2d2d2); }
.vscroll .thumb { height: 115px; margin-top: 1px; background: linear-gradient(90deg, #f4f4f4, #d4d4d4); }
.vscroll .thumb i { width: 8px; height: 7px; background: repeating-linear-gradient(#555 0 1px, transparent 1px 2px); }
.vscroll .last { margin-top: auto; }
.dlg-hscroll { display: flex; height: 18px; margin-right: 18px; background: #c4c4c4; }
.dlg-hscroll .thumb { flex: 1; margin: 0 5px 0 2px; }
.refresh { display: flex; justify-content: flex-end; padding-top: 8px; }
.btn { width: 90px; height: 20px; border: 1px solid #888; background: linear-gradient(#f0f0f0, #e2e2e2 45%, #cdcdcd 50%, #dcdcdc); box-shadow: inset 1px 1px 0 #fff; text-align: center; line-height: 18px; }
.btn:disabled { color: #888; background: #d4d4d4; }
.dlg-foot { display: flex; justify-content: flex-end; gap: 6px; padding: 12px 12px 13px; background: #adadad; }
.loadwrap { position: relative; }
</style>
